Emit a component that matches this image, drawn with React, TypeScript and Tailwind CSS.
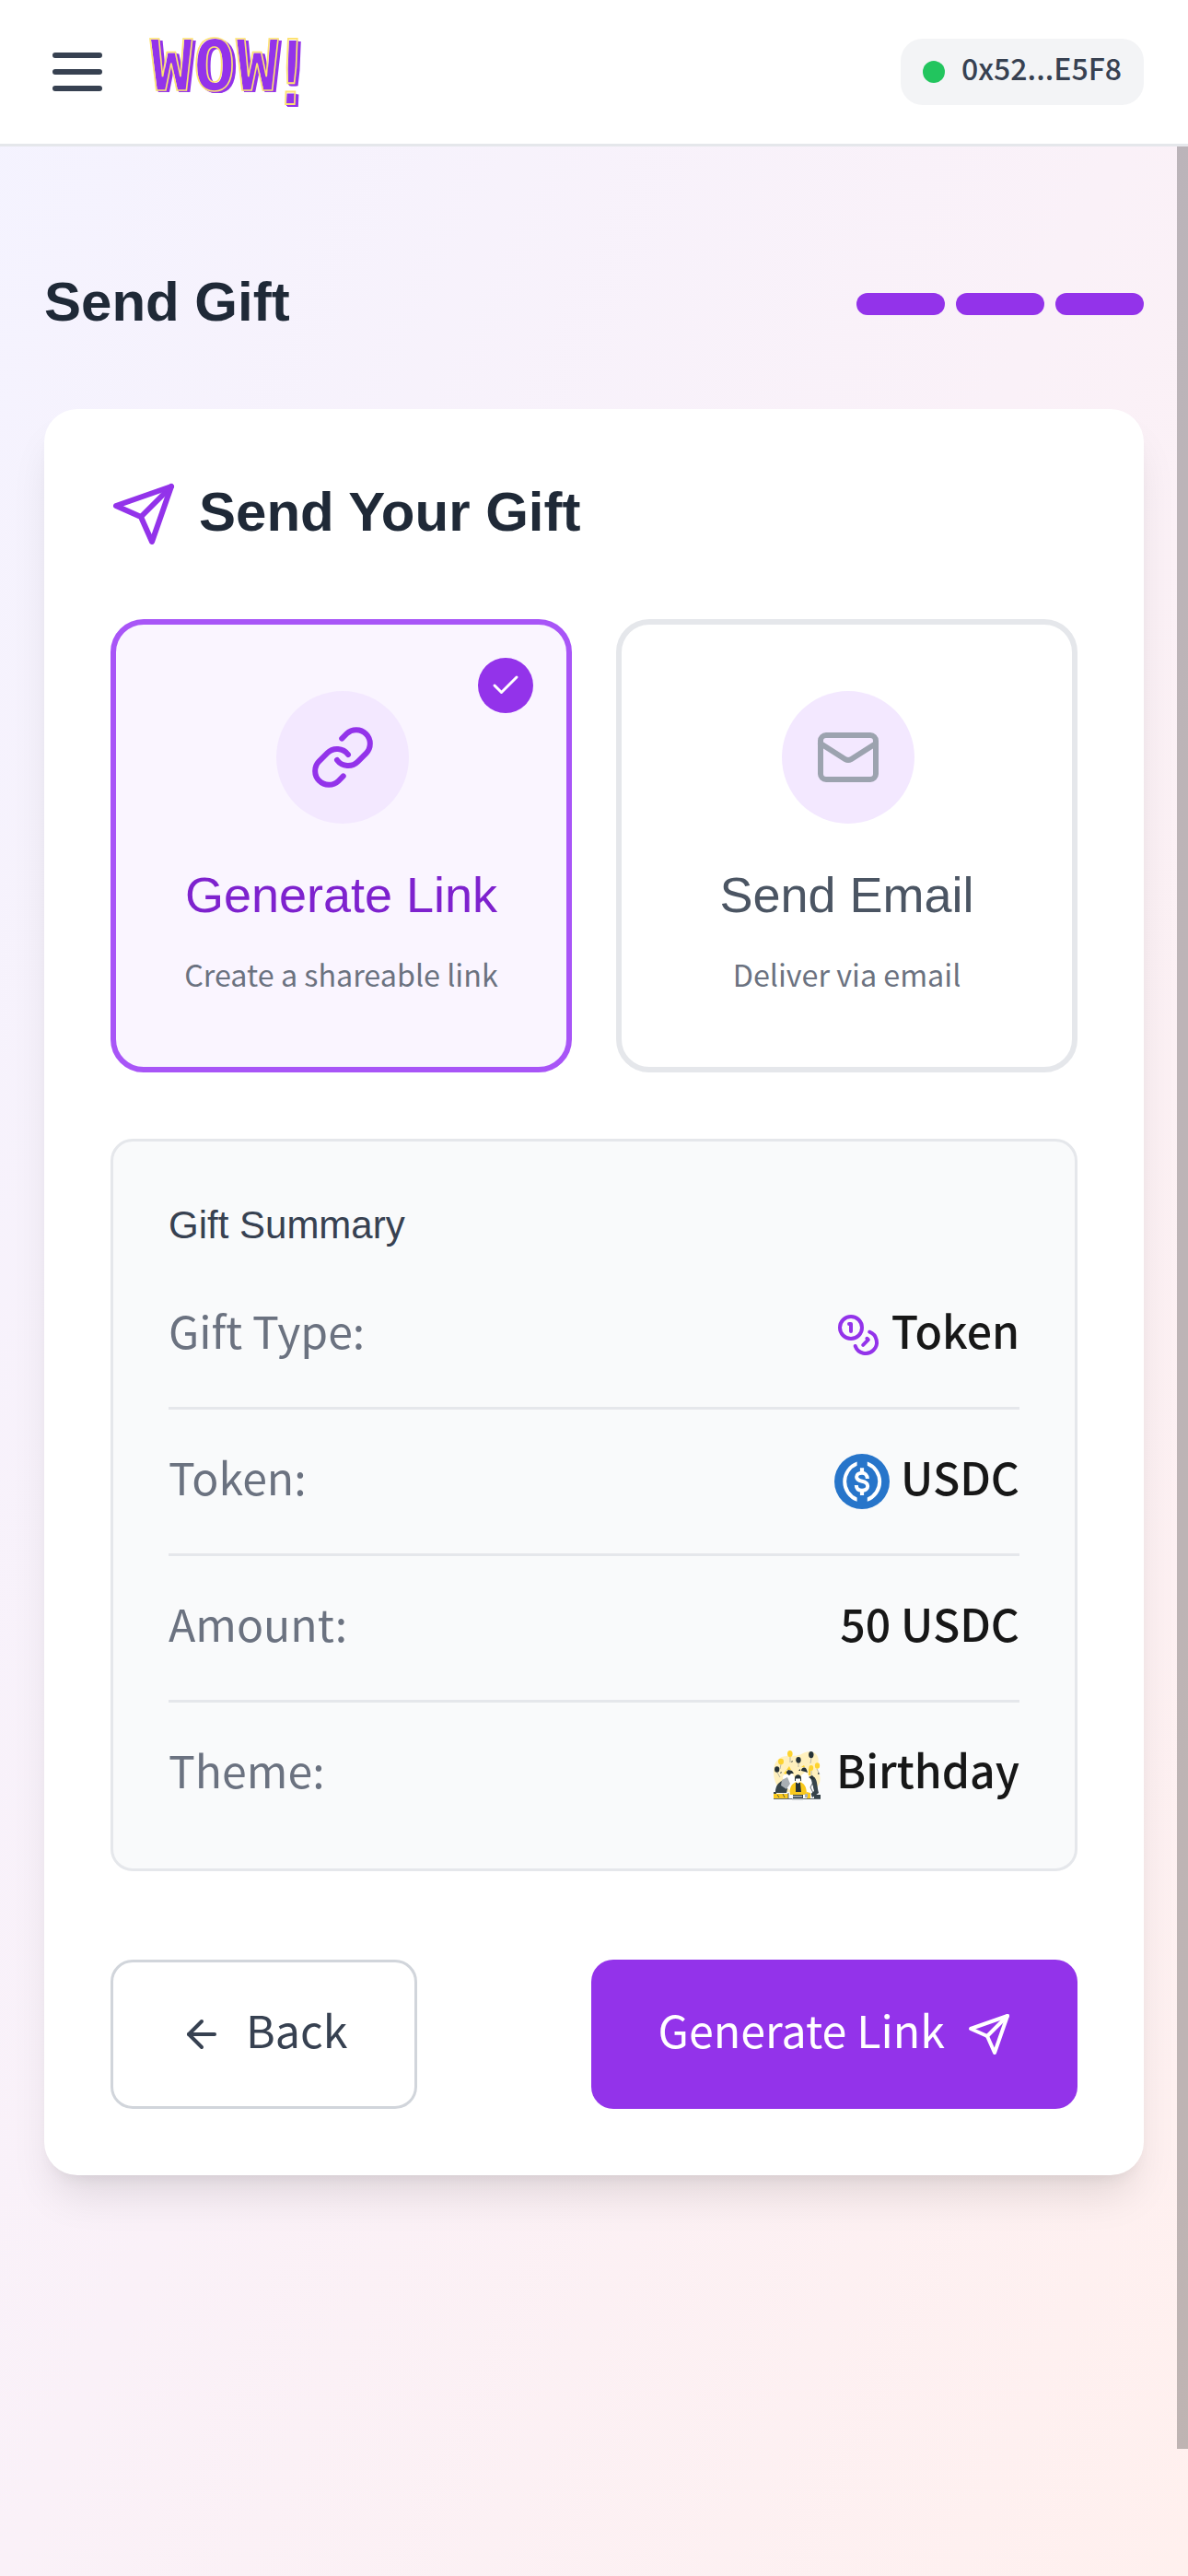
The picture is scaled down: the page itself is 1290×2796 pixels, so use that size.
import type { ReactNode } from "react";
import { ArrowLeft, Check, Coins, Link, Mail } from "lucide-react";

const BODY = "font-['Noto_Sans_CJK_JP','Noto_Sans_CJK_SC',sans-serif]";
const HEAD = "font-['Liberation_Sans',Arial,sans-serif]";

function SendIcon({ className }: { className: string }) {
  return (
    <svg className={className} viewBox="0 0 24 24" fill="none" stroke="currentColor" strokeWidth="2" strokeLinecap="round" strokeLinejoin="round">
      <path d="M22 2 11 13" />
      <path d="m22 2-7 20-4-9-9-4 20-7z" />
    </svg>
  );
}

function MenuIcon() {
  return (
    <svg className="size-[72px] text-[#374151]" viewBox="0 0 24 24" fill="none" stroke="currentColor" strokeWidth="2" strokeLinecap="round">
      <path d="M4 6h16M4 12h16M4 18h16" />
    </svg>
  );
}

/* Wordmark: a thin yellow outline over an offset purple body. */
function Logo() {
  return (
    <div className="-mt-3 flex h-20 font-['DejaVu_Sans_Mono',monospace] text-[76px] leading-[80px] font-bold text-transparent [-webkit-text-stroke:1.600px_#fde272] [text-shadow:1px_1px_0_#9333ea,2px_2px_0_#9333ea,3px_2px_0_#9333ea,4px_2px_0_#9333ea]">
      <span className="tracking-[0.9px]">WOW</span>
      <span className="-ml-[8px] inline-block origin-[50%_11px] scale-y-[1.28] -skew-x-3">!</span>
    </div>
  );
}

function UsdcIcon() {
  return (
    <svg className="size-[60px]" viewBox="0 0 60 60" fill="none">
      <circle cx="30" cy="30" r="30" fill="#2775ca" />
      <path fill="#fff" d="M24.600 8.600v4.200a18.800 18.800 0 0 0 0 34.600v4.300A22.800 22.800 0 0 1 24.600 8.600zM35.800 8.600v4.200a18.800 18.800 0 0 1 0 34.600v4.300A22.800 22.800 0 0 0 35.800 8.600z" />
      <path stroke="#fff" strokeWidth="4" d="M35.900 27c-.2-4-2.800-6.300-5.900-6.300-3.300 0-5.900 1.700-5.900 4.400 0 3 2.600 4 5.900 4.700 3.700.8 6.200 2.200 6.200 5.200 0 3.100-2.700 4.800-6.200 4.800-3.700 0-6.100-2-6.200-5.800" />
      <path stroke="#fff" strokeWidth="4.200" d="M30 15.300v5M30 39.800v5.300" />
    </svg>
  );
}

function BirthdayArt() {
  return (
    <svg className="size-[60px]" viewBox="0 0 60 60" fill="none">
      <path fill="#fff0bd" d="M4 27c0-11 6-17 15-17 7 0 12 0 17-3 6-3 14-2 16 4 2 5-1 8 0 13 1 5 4 9 2 15l-5 10H12C7 42 4 36 4 27z" />
      <g stroke="#8b9196" strokeWidth=".6">
        <path d="M22 11v6M12 19l-1 5M45 12l-1 6M31 18v4M8 28l3 5M45 26v6M51 24l3 6" />
      </g>
      <g fill="#fdd32f">
        <ellipse cx="21.800" cy="7.500" rx="2.800" ry="3.500" />
        <ellipse cx="12" cy="16" rx="3" ry="3.300" />
        <ellipse cx="44.800" cy="23" rx="2.400" ry="3" />
        <ellipse cx="51.500" cy="20.500" rx="2.600" ry="3.300" />
      </g>
      <g fill="#263238">
        <ellipse cx="44.800" cy="8.600" rx="2.700" ry="3.600" />
        <ellipse cx="31" cy="14.300" rx="2.700" ry="3.400" />
        <ellipse cx="7.700" cy="24.500" rx="2.600" ry="3.300" />
        <path d="m23 16 2-1-1 2zM31 26l2-2v2zM11 28l2-1-1 2zM52 28l2 1-2 1z" />
      </g>
      <path fill="#37444a" d="M6 49c0-6 3-10 7-12l7 5-2 8H6zM42 34l6-1c4 3 3 11 5 17l-7 5-3-9z" />
      <path fill="#fff" d="m14 32 5-5 6 3 4 8-7 9-7-5zM34 31l5-4 6 9 3 12-7 6-6-8z" />
      <path fill="#a9afb3" d="m13 36 6-3 3 7-4 6-6-4z" />
      <path fill="#263238" d="m17 28 3-3 4 1 2 3-3 0-2 2zM34 26c0-4 5-5 6-1l1 3-3-1zM42 33l4-2 3 3-2 2z" />
      <path fill="#fdd32f" d="m18 25 3-4 2 4zM15 29l3-4v5zM34 22l3-2 1 2zM42 24l2-2v9h-2z" />
      <path fill="#f9c91e" d="M22 52c-1-7 1-13 8-14 7 0 10 5 10 14zM4 51h16v5H4zM40 49l4 1v6h-4z" />
      <path fill="#263238" d="M28 39h5l1 10h-6zM27 34c0-5 7-5 7 0v3h-7z" />
      <path fill="#fff" d="M28 34.500h5v3l-2.500 2.500-2.500-2.500zM45 39l2 5-2 5-2-5z" />
      <path fill="#37444a" d="M25 52h11v4H25zM4 49h3v2H4zM48 52h7v4h-7z" />
      <path stroke="#37444a" strokeWidth=".8" d="M4 56.500h51M8 52l2 3M14 51l2 4M47 38l-3 6 4 8M20 50v6" />
      <path fill="#a9afb3" d="M25 53h10v1.500H25zM24 56h12v1.500H24zM38 51h3v4h-3z" />
    </svg>
  );
}

function OptionCard({ active, icon, title, text }: { active?: boolean; icon: ReactNode; title: string; text: string }) {
  return (
    <button
      className={`relative flex h-[492px] flex-col items-center rounded-[36px] border-[6px] border-solid p-[72px] ${active ? "border-[#a855f7] bg-[#faf5ff]" : "border-[#e5e7eb] bg-white"}`}
    >
      <span className="ml-[3px] flex size-[144px] shrink-0 items-center justify-center rounded-full bg-[#f3e8ff]">{icon}</span>
      <span className={`${HEAD} mt-[35px] text-[54px] leading-[84px] whitespace-nowrap ${active ? "text-[#7e22ce]" : "text-[#4b5563]"}`}>{title}</span>
      <span className="mt-5 text-[32.300px] leading-[48px] whitespace-nowrap text-[#6b7280]">{text}</span>
      {active && (
        <span className="absolute top-9 right-9 flex size-[60px] items-center justify-center rounded-full bg-[#9333ea]">
          <Check className="size-9 text-white" />
        </span>
      )}
    </button>
  );
}

function SummaryRow({ label, icon, value }: { label: string; icon?: ReactNode; value: string }) {
  return (
    <div className="flex items-center justify-between border-b-[3px] border-[#e5e7eb] py-9 text-[48.200px] leading-[84px] first:pt-0 last:border-b-0 last:pb-0">
      <span className="flex h-[84px] items-center text-[#6b7280]">
        <span className="-mt-3">{label}</span>
      </span>
      <span className="flex h-[84px] items-center gap-3 font-medium text-[#171717]">
        {icon}
        <span className="-mt-3">{value}</span>
      </span>
    </div>
  );
}

export default function App() {
  return (
    <div className={`${BODY} relative flex h-[2796px] w-[1290px] flex-col overflow-hidden bg-[linear-gradient(to_bottom_right,#f4f3ff,#faf1f8,#fff0ee)]`}>
      <header className="flex h-[159px] shrink-0 items-center justify-between border-b-[3px] border-[#e5e7eb] bg-white px-12">
        <div className="flex items-center gap-[43px]">
          <MenuIcon />
          <Logo />
        </div>
        <div className="flex h-[72px] items-center gap-[18px] rounded-3xl bg-[#f3f4f6] px-6">
          <span className="size-6 rounded-full bg-[#22c55e]" />
          <span className="-mt-[10px] text-[32px] leading-[48px] font-medium text-[#374151]">0x52...E5F8</span>
        </div>
      </header>

      <main className="px-12">
        <div className="mt-[129px] flex h-[84px] items-center justify-between">
          <h1 className={`${HEAD} -mt-1 text-[60px] leading-[84px] font-bold text-[#1f2937]`}>Send Gift</h1>
          <div className="flex gap-3">
            <span className="h-6 w-24 rounded-full bg-[#9333ea]" />
            <span className="h-6 w-24 rounded-full bg-[#9333ea]" />
            <span className="h-6 w-24 rounded-full bg-[#9333ea]" />
          </div>
        </div>

        <section className="mt-[72px] rounded-[36px] bg-white p-[72px] shadow-[0_30px_45px_-9px_rgba(0,0,0,0.1),0_12px_18px_-12px_rgba(0,0,0,0.1)]">
          <div className="flex h-[84px] items-center gap-6">
            <SendIcon className="size-[72px] text-[#9333ea]" />
            <h2 className={`${HEAD} -mt-1 text-[60px] leading-[84px] font-bold text-[#1f2937]`}>Send Your Gift</h2>
          </div>

          <div className="mt-[72px] grid grid-cols-2 gap-12">
            <OptionCard active icon={<Link className="size-[72px] text-[#9333ea]" />} title="Generate Link" text="Create a shareable link" />
            <OptionCard icon={<Mail className="size-[72px] text-[#9ca3af]" />} title="Send Email" text="Deliver via email" />
          </div>

          <div className="mt-[72px] rounded-3xl border-[3px] border-[#e5e7eb] bg-[#f9fafb] px-[60px] pt-[61px] pb-[60px]">
            <h3 className={`${HEAD} mb-[47px] text-[42px] leading-[60px] text-[#374151]`}>Gift Summary</h3>
            <div>
              <SummaryRow label="Gift Type:" icon={<Coins className="size-12 text-[#9333ea]" />} value="Token" />
              <SummaryRow label="Token:" icon={<UsdcIcon />} value="USDC" />
              <SummaryRow label="Amount:" value="50 USDC" />
              <SummaryRow label="Theme:" icon={<BirthdayArt />} value="Birthday" />
            </div>
          </div>

          <div className="mt-24 flex items-center justify-between text-[48.400px] leading-[84px]">
            <button className="flex h-[162px] w-[333px] items-center gap-6 rounded-3xl border-[3px] border-[#d1d5db] bg-white px-[72px] text-[#374151]">
              <ArrowLeft className="size-12 shrink-0" />
              <span className="-mt-3">Back</span>
            </button>
            <button className="flex h-[162px] w-[528px] items-center justify-end gap-6 rounded-3xl bg-[#9333ea] px-[72px] whitespace-nowrap text-white">
              <span className="-mt-3">Generate Link</span>
              <SendIcon className="size-12 shrink-0" />
            </button>
          </div>
        </section>
      </main>

      {/* Overlay scrollbar thumb */}
      <div className="absolute top-[159px] right-0 h-[2499px] w-3 bg-black/25" />
    </div>
  );
}
